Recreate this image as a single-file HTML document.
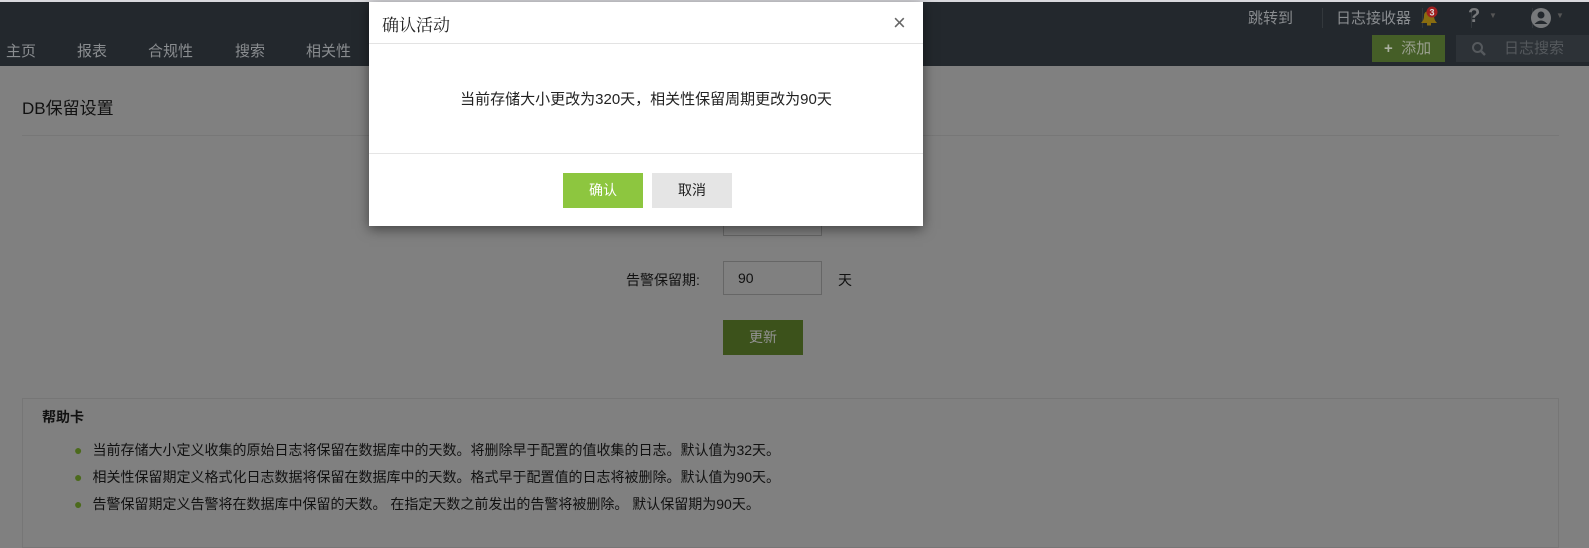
<!DOCTYPE html>
<html><head><meta charset="utf-8"><style>
*{margin:0;padding:0;box-sizing:border-box}
body{width:1589px;height:536px;overflow:hidden;position:relative;background:#808080;font-family:"Liberation Sans","Noto Sans CJK SC",sans-serif;color:#111}
.a{position:absolute;white-space:nowrap}
.top{position:absolute;left:0;top:0;width:1589px;height:2px;background:#d9d9dd}
.nav{position:absolute;left:0;top:2px;width:1589px;height:64px;background:#23282d}
.nav .a{color:#8a8d90;font-size:15px}
.sep{position:absolute;top:6px;width:1px;height:20px;background:#33383c}
.modal{position:absolute;left:369px;top:2px;width:554px;height:224px;background:#fff;box-shadow:0 3px 12px rgba(0,0,0,.5)}
</style></head><body>
<div class="top"></div>
<div class="nav">
 <div class="a" style="left:1248px;top:5px">跳转到</div>
 <div class="sep" style="left:1322px"></div>
 <div class="a" style="left:1336px;top:5px">日志接收器</div>
 <div class="sep" style="left:1422px"></div>
 <svg class="a" style="left:1418px;top:4px" width="22" height="22"><path d="M3 17 Q6 14 6 10 Q6 5 11 5 Q16 5 16 10 Q16 14 19 17 Z" fill="#8a6d10"/><rect x="9" y="17" width="4" height="2.5" fill="#8a6d10"/><circle cx="14" cy="6" r="5.5" fill="#a01f1f"/><text x="14" y="9.5" font-size="9" fill="#ddd" text-anchor="middle" font-family="Liberation Sans" font-weight="bold">3</text></svg>
 <div class="sep" style="left:1471px"></div>
 <div class="a" style="left:1468px;top:3px;font-size:20px;font-weight:bold;color:#77797b">?</div>
 <div class="a" style="left:1489px;top:9px;font-size:8px;color:#555">▼</div>
 <div class="sep" style="left:1532px"></div>
 <svg class="a" style="left:1530px;top:5px" width="22" height="22"><circle cx="11" cy="11" r="10" fill="#77797b"/><circle cx="11" cy="8" r="3.5" fill="#23282d"/><path d="M4.5 17 Q11 10 17.5 17" fill="#23282d"/></svg>
 <div class="a" style="left:1556px;top:9px;font-size:8px;color:#555">▼</div>
 <div class="a" style="left:1372px;top:33px;width:73px;height:27px;background:#455e27;color:#9aa08f;font-size:15px;line-height:27px;padding-left:12px"><b style="color:#aab0a0">+</b>&nbsp; 添加</div>
 <div class="a" style="left:1456px;top:33px;width:133px;height:27px;background:#2d3237;color:#55595d;font-size:15px;line-height:27px;padding-left:48px">日志搜索</div>
 <svg class="a" style="left:1471px;top:39px" width="16" height="16"><circle cx="6.5" cy="6.5" r="4.5" stroke="#55595d" stroke-width="2" fill="none"/><path d="M10 10 L14 14" stroke="#55595d" stroke-width="2.5"/></svg>
 <div class="a" style="left:6px;top:38px">主页</div>
 <div class="a" style="left:77px;top:38px">报表</div>
 <div class="a" style="left:148px;top:38px">合规性</div>
 <div class="a" style="left:235px;top:38px">搜索</div>
 <div class="a" style="left:306px;top:38px">相关性</div>
</div>
<div class="a" style="left:22px;top:94px;font-size:17px;color:#111">DB保留设置</div>
<div class="a" style="left:22px;top:135px;width:1537px;height:1px;background:#777"></div>
<div class="a" style="left:723px;top:200px;width:99px;height:36px;border:1px solid #666"></div>
<div class="a" style="left:626px;top:270px;font-size:14px">告警保留期:</div>
<div class="a" style="left:723px;top:261px;width:99px;height:34px;border:1px solid #666;font-size:14px;line-height:32px;padding-left:14px">90</div>
<div class="a" style="left:838px;top:270px;font-size:14px">天</div>
<div class="a" style="left:723px;top:320px;width:80px;height:35px;background:#3c521b;color:#939393;font-size:14px;line-height:35px;text-align:center">更新</div>
<div class="a" style="left:22px;top:398px;width:1537px;height:150px;border:1px solid #767676"></div>
<div class="a" style="left:42px;top:407px;font-size:14px;font-weight:bold">帮助卡</div>
<div class="a" style="left:74px;top:437px;font-size:14px;line-height:27px">
<div><span style="color:#4c6a1c;margin-right:10px">●</span>当前存储大小定义收集的原始日志将保留在数据库中的天数。将删除早于配置的值收集的日志。默认值为32天。</div>
<div><span style="color:#4c6a1c;margin-right:10px">●</span>相关性保留期定义格式化日志数据将保留在数据库中的天数。格式早于配置值的日志将被删除。默认值为90天。</div>
<div><span style="color:#4c6a1c;margin-right:10px">●</span>告警保留期定义告警将在数据库中保留的天数。 在指定天数之前发出的告警将被删除。 默认保留期为90天。</div>
</div>
<div class="modal">
 <div class="a" style="left:13px;top:9px;font-size:17px;font-family:'Liberation Serif','Noto Serif CJK SC',serif;color:#222">确认活动</div>
 <div class="a" style="left:524px;top:8px;font-size:22px;color:#666;font-weight:300">×</div>
 <div class="a" style="left:0;top:41px;width:554px;height:1px;background:#e3e3e3"></div>
 <div class="a" style="left:0;top:86px;width:554px;text-align:center;font-size:15px;color:#222">当前存储大小更改为320天，相关性保留周期更改为90天</div>
 <div class="a" style="left:0;top:151px;width:554px;height:1px;background:#e5e5e5"></div>
 <div class="a" style="left:194px;top:171px;width:80px;height:35px;background:#8dc63f;color:#fff;font-size:14px;line-height:35px;text-align:center">确认</div>
 <div class="a" style="left:283px;top:171px;width:80px;height:35px;background:#e5e5e5;color:#222;font-size:14px;line-height:35px;text-align:center">取消</div>
</div>
</body></html>
